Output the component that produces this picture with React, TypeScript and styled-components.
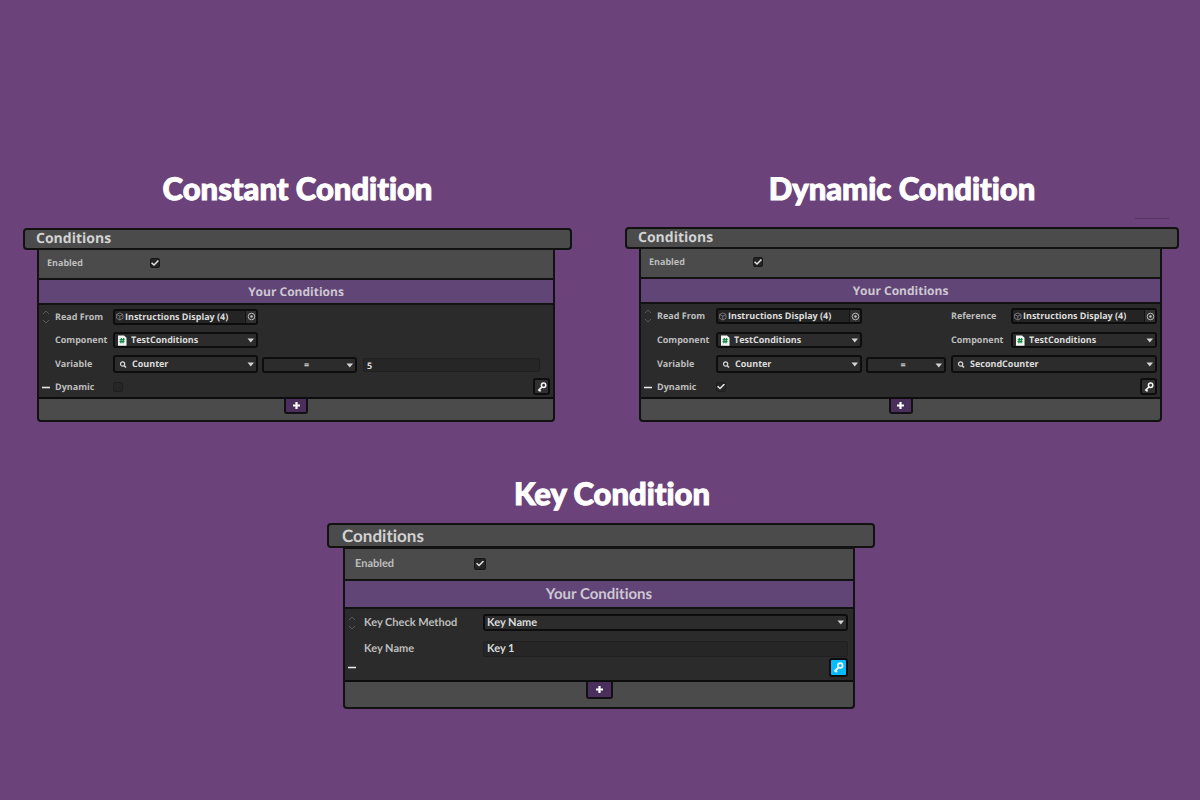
import React, { useId } from 'react';
import styled, { createGlobalStyle, css } from 'styled-components';

const GlobalStyle = createGlobalStyle`
  *, *::before, *::after { box-sizing: border-box; }
  body { margin: 0; background: #6b427a; text-rendering: geometricPrecision; }
`;

type Look = 'regular' | 'large';

const Page = styled.main`
  min-height: 100vh;
  padding: 169px 21px 90px 23px;
  color: #c4c4c4;
  font-family: 'Open Sans', sans-serif;
`;

const TopRow = styled.div`
  display: grid;
  grid-template-columns: 549fr 554fr;
  column-gap: 53px;
`;

const BottomRow = styled.div`
  display: flex;
  justify-content: center;
  margin-top: 52px;
  font-family: Lato, sans-serif;
  font-variant-ligatures: none;
`;

const Figure = styled.section<{ $share?: string }>`
  width: ${(p) => p.$share ?? '100%'};
`;

const Title = styled.h2<{ $indent?: number }>`
  margin: 0;
  padding-left: ${(p) => p.$indent ?? 0}px;
  color: #fff;
  font: 900 31px/38px Lato, sans-serif;
  font-variant-ligatures: none;
  -webkit-text-stroke: 1px #fff;
  text-align: center;
  white-space: nowrap;
`;

const TitleGap = styled.div<{ $height: number }>`
  display: flex;
  justify-content: flex-end;
  height: ${(p) => p.$height}px;
  padding: 11px 10px 0 0;
`;

const FaintRule = styled.span`
  width: 34px;
  height: 1px;
  background: #543460;
`;

const PanelHeader = styled.h3<{ $look: Look }>`
  margin: 0;
  border: 2px solid #131213;
  border-radius: 4px;
  background: #4b4b4b;
  color: #d2d2d2;
  ${(p) =>
    p.$look === 'large'
      ? css`padding: 0 13px; font-size: 17px; line-height: 21px;`
      : css`padding: 0 11px; font-size: 14px; line-height: 18px;`}
  font-weight: 700;
`;

const PanelBody = styled.div<{ $look: Look }>`
  margin: ${(p) => (p.$look === 'large' ? '-1px 20px 0 16px' : '-2px 17px 0 14px')};
  border: 2px solid #131213;
  border-radius: 0 0 4px 4px;
  background: #4b4b4b;
`;

const EnabledRow = styled.div<{ $look: Look }>`
  display: flex;
  align-items: center;
  ${(p) =>
    p.$look === 'large'
      ? css`height: 30px; padding: 0 0 1px 10px;`
      : css`height: 28px; padding: 0 0 2px 8px;`}
`;

const Banner = styled.h4<{ $look: Look }>`
  margin: 0;
  border: solid #131213;
  border-width: 2px 0;
  background: #614577;
  color: #cdc8d2;
  text-align: center;
  font-weight: 700;
  ${(p) =>
    p.$look === 'large'
      ? css`font-size: 15px; line-height: 26px;`
      : css`font-size: 12px; line-height: 23px;`}
`;

const Rows = styled.div<{ $columns: string; $rows: string; $right: number; $bottom?: number }>`
  display: grid;
  grid-template-columns: ${(p) => p.$columns};
  grid-template-rows: ${(p) => p.$rows};
  align-items: center;
  padding: 0 ${(p) => p.$right}px ${(p) => p.$bottom ?? 0}px 0;
  background: #2b2b2b;
`;

const Cell = styled.div<{ $col: string; $row: number; $low?: boolean }>`
  grid-column: ${(p) => p.$col};
  grid-row: ${(p) => p.$row};
  display: flex;
  min-width: 0;
  padding-top: ${(p) => (p.$low ? 2 : 0)}px;
`;

const Label = styled.label<{ $look?: Look; $col?: number; $row?: number; $width?: number }>`
  ${(p) => p.$col && css`grid-column: ${p.$col}; grid-row: ${p.$row};`}
  ${(p) => p.$width && css`width: ${p.$width}px;`}
  color: #bebebe;
  font-size: ${(p) => (p.$look === 'large' ? 11 : 9)}px;
  line-height: 14px;
  font-weight: 700;
  white-space: nowrap;
`;

const Tick = styled.input<{ $size: number; $faint?: boolean }>`
  appearance: none;
  display: grid;
  place-items: center;
  flex: none;
  width: ${(p) => p.$size}px;
  height: ${(p) => p.$size}px;
  margin: 0;
  border: 1px solid ${(p) => (p.$faint ? '#1f1f1f' : '#171717')};
  border-radius: 2px;
  background: ${(p) => (p.$faint ? '#262626' : '#242424')};

  &:checked::after {
    content: '';
    width: 8px;
    height: 6px;
    background: #e4e4e4;
    clip-path: polygon(0 55%, 14% 38%, 37% 66%, 86% 0, 100% 16%, 38% 100%);
  }
`;

const Field = styled.div<{ $height: number; $fill?: string }>`
  display: flex;
  align-items: center;
  flex: 1;
  min-width: 0;
  height: ${(p) => p.$height}px;
  border: 2px solid #0d0d0d;
  border-radius: 3px;
  background: ${(p) => p.$fill ?? '#2c2c2c'};
  overflow: hidden;

  > svg { flex: none; }
`;

const controlText = css<{ $look?: Look }>`
  flex: 1;
  min-width: 0;
  width: 100%;
  margin: 0;
  border: 0;
  outline: 0;
  background: transparent;
  color: #dcdcdc;
  font-family: inherit;
  font-weight: 700;
  font-size: ${(p) => (p.$look === 'large' ? 11 : 9)}px;
  line-height: 12px;
  text-rendering: inherit;
`;

const Select = styled.select<{ $look?: Look; $center?: boolean; $pad: number }>`
  appearance: none;
  ${controlText}
  padding: 0 0 0 ${(p) => p.$pad}px;
  ${(p) => p.$center && css`text-align: center; text-align-last: center;`}
`;

const ObjectInput = styled.input`
  ${controlText}
  padding: 0 0 0 1px;
`;

const ValueInput = styled.input<{ $look?: Look }>`
  ${controlText}
  height: ${(p) => (p.$look === 'large' ? 16 : 14)}px;
  padding: 0 3px;
  border: 1px solid #202020;
  border-radius: 2px;
  background: #262626;
`;

const PickButton = styled.button`
  display: grid;
  place-items: center;
  flex: none;
  width: 11px;
  height: 13px;
  padding: 0;
  border: 0;
  border-left: 1px solid #141414;
  background: #303030;
`;

const Handle = styled.button`
  grid-column: 1;
  grid-row: 1;
  display: grid;
  place-items: center;
  width: 14px;
  height: 16px;
  padding: 0;
  border: 0;
  background: none;
`;

const RemoveButton = styled(Handle)<{ $row: number }>`
  grid-row: ${(p) => p.$row};
`;

const KeyCell = styled.div<{ $row: number; $overhang: number }>`
  grid-column: -2 / -1;
  grid-row: ${(p) => p.$row};
  display: flex;
  margin-right: -${(p) => p.$overhang}px;
`;

const KeyButton = styled.button<{ $active?: boolean }>`
  display: grid;
  place-items: center;
  width: ${(p) => (p.$active ? 19 : 17)}px;
  height: ${(p) => (p.$active ? 19 : 17)}px;
  margin-left: auto;
  padding: 0;
  border: 2px solid #0d0d0d;
  border-radius: 3px;
  background: ${(p) => (p.$active ? '#06bcff' : '#303030')};
`;

const Footer = styled.div<{ $look: Look }>`
  display: flex;
  justify-content: center;
  align-items: flex-start;
  height: ${(p) => (p.$look === 'large' ? 27 : 23)}px;
  border-top: 2px solid #0d0d0d;
`;

const AddButton = styled.button<{ $look: Look }>`
  display: grid;
  place-items: center;
  width: ${(p) => (p.$look === 'large' ? 27 : 24)}px;
  height: ${(p) => (p.$look === 'large' ? 17 : 15)}px;
  padding: 0;
  border: 2px solid #131015;
  border-top: 0;
  border-radius: 0 0 3px 3px;
  background: #4a2f5d;
`;

const Caret = () => (
  <svg width="10" height="5" viewBox="0 0 10 5" aria-hidden="true">
    <path d="M1.500 0.500h6.500L4.750 4.500z" fill="#d4d4d4" />
  </svg>
);

const SearchIcon = () => (
  <svg width="15" height="9" viewBox="0 0 15 9" fill="none" stroke="#d4d4d4" aria-hidden="true">
    <circle cx="7.600" cy="4" r="2.100" strokeWidth="1.200" />
    <path d="M9 5.400l2 2.100" strokeWidth="1.500" />
  </svg>
);

const ScriptIcon = () => (
  <svg width="14" height="11" viewBox="0 0 14 11" aria-hidden="true">
    <path d="M3 0.500h6l2.500 2.200v8H3z" fill="#f2f5f2" />
    <path d="M6.400 3L5.800 8.200M8.600 3L8 8.200M4.700 4.700h5M4.500 6.600h5" stroke="#17894a" strokeWidth="1.300" fill="none" />
  </svg>
);

const CubeIcon = () => (
  <svg width="9" height="9" viewBox="0 0 9 9" fill="none" stroke="#858585" strokeWidth="0.800" aria-hidden="true">
    <path d="M4.800 0.900L8 2.500v3.800L4.800 8 1.600 6.300V2.500zM1.600 2.500l3.200 1.600L8 2.500M4.800 4.100V8" />
  </svg>
);

const TargetIcon = () => (
  <svg width="9" height="9" viewBox="0 0 9 9" aria-hidden="true">
    <circle cx="4.500" cy="4.500" r="3.300" fill="none" stroke="#c4c4c4" strokeWidth="0.900" />
    <circle cx="4.500" cy="4.500" r="1.200" fill="#c4c4c4" />
  </svg>
);

const KeyIcon = ({ size }: { size: number }) => (
  <svg width={size} height={size} viewBox="0 0 12 12" fill="none" stroke="#f4f4f4" aria-hidden="true">
    <circle cx="7.600" cy="4.200" r="2.200" strokeWidth="1.500" />
    <path d="M5.900 6L2.300 9.700M2.600 8.300l2 2" strokeWidth="1.700" />
  </svg>
);

const PlusIcon = () => (
  <svg width="9" height="9" viewBox="0 0 9 9" aria-hidden="true">
    <path d="M4.500 1v7M1 4.500h7" stroke="#fff" strokeWidth="2.200" />
  </svg>
);

const MinusIcon = () => (
  <svg width="12" height="6" viewBox="0 0 12 6" aria-hidden="true">
    <path d="M2 3.500h8" stroke="#e6e6e6" strokeWidth="1.600" />
  </svg>
);

const ReorderIcon = () => (
  <svg width="8" height="14" viewBox="0 0 8 14" fill="none" stroke="#595959" aria-hidden="true">
    <path d="M1 4l3-3 3 3M1 10l3 3 3-3" />
  </svg>
);

function Dropdown(props: {
  id?: string;
  name?: string;
  value: string;
  height: number;
  icon?: React.ReactNode;
  center?: boolean;
  look?: Look;
}) {
  return (
    <Field $height={props.height}>
      {props.icon}
      <Select
        id={props.id}
        aria-label={props.name}
        $look={props.look}
        $center={props.center}
        $pad={props.center ? 4 : 2}
      >
        <option>{props.value}</option>
      </Select>
      <Caret />
    </Field>
  );
}

function ObjectField({ id }: { id: string }) {
  return (
    <Field $height={16} $fill="#242424">
      <CubeIcon />
      <ObjectInput id={id} type="text" readOnly value="Instructions Display (4)" />
      <PickButton type="button" aria-label="Pick object">
        <TargetIcon />
      </PickButton>
    </Field>
  );
}

function Panel(props: { look: Look; tickColumn: number; children: React.ReactNode }) {
  const id = useId();
  const { look } = props;
  return (
    <div>
      <PanelHeader $look={look}>Conditions</PanelHeader>
      <PanelBody $look={look}>
        <EnabledRow $look={look}>
          <Label htmlFor={id} $look={look} $width={props.tickColumn}>
            Enabled
          </Label>
          <Tick id={id} type="checkbox" defaultChecked $size={look === 'large' ? 12 : 10} />
        </EnabledRow>
        <Banner $look={look}>Your Conditions</Banner>
        {props.children}
        <Footer $look={look}>
          <AddButton type="button" aria-label="Add condition" $look={look}>
            <PlusIcon />
          </AddButton>
        </Footer>
      </PanelBody>
    </div>
  );
}

function VariableConditions({ dynamic }: { dynamic?: boolean }) {
  const id = useId();
  return (
    <Rows
      $columns={
        dynamic
          ? '16px 59px 146fr 4px 80fr 5px 60px 146fr'
          : '16px 58px 145fr 4px 95fr 6px 177fr'
      }
      $rows={dynamic ? '24px 24px 24px 21px' : '23px 24px 24px 21px'}
      $right={dynamic ? 3 : 13}
    >
      <Handle type="button" aria-label="Reorder">
        <ReorderIcon />
      </Handle>
      <Label htmlFor={id + 'from'} $col={2} $row={1}>Read From</Label>
      <Cell $col="3" $row={1}>
        <ObjectField id={id + 'from'} />
      </Cell>
      <Label htmlFor={id + 'comp'} $col={2} $row={2}>Component</Label>
      <Cell $col="3" $row={2}>
        <Dropdown id={id + 'comp'} value="TestConditions" height={16} icon={<ScriptIcon />} />
      </Cell>
      <Label htmlFor={id + 'var'} $col={2} $row={3}>Variable</Label>
      <Cell $col="3" $row={3}>
        <Dropdown id={id + 'var'} value="Counter" height={18} icon={<SearchIcon />} />
      </Cell>
      <Cell $col="5" $row={3} $low>
        <Dropdown name="Operator" value="=" height={16} center />
      </Cell>
      {dynamic ? (
        <>
          <Label htmlFor={id + 'ref'} $col={7} $row={1}>Reference</Label>
          <Cell $col="8" $row={1}>
            <ObjectField id={id + 'ref'} />
          </Cell>
          <Label htmlFor={id + 'comp2'} $col={7} $row={2}>Component</Label>
          <Cell $col="8" $row={2}>
            <Dropdown id={id + 'comp2'} value="TestConditions" height={16} icon={<ScriptIcon />} />
          </Cell>
          <Cell $col="7 / 9" $row={3}>
            <Dropdown name="Second variable" value="SecondCounter" height={18} icon={<SearchIcon />} />
          </Cell>
        </>
      ) : (
        <Cell $col="7" $row={3} $low>
          <ValueInput type="text" aria-label="Value" defaultValue="5" />
        </Cell>
      )}
      <RemoveButton type="button" aria-label="Remove condition" $row={4}>
        <MinusIcon />
      </RemoveButton>
      <Label htmlFor={id + 'dyn'} $col={2} $row={4}>Dynamic</Label>
      <Cell $col="3" $row={4}>
        <Tick id={id + 'dyn'} type="checkbox" defaultChecked={dynamic} $size={10} $faint />
      </Cell>
      <KeyCell $row={4} $overhang={dynamic ? 0 : 10}>
        <KeyButton type="button" aria-label="Key">
          <KeyIcon size={12} />
        </KeyButton>
      </KeyCell>
    </Rows>
  );
}

function KeyConditions() {
  const id = useId();
  return (
    <Rows $columns="19px 119px 1fr" $rows="27px 25px 12px" $right={5} $bottom={7}>
      <Handle type="button" aria-label="Reorder">
        <ReorderIcon />
      </Handle>
      <Label htmlFor={id + 'method'} $look="large" $col={2} $row={1}>Key Check Method</Label>
      <Cell $col="3" $row={1}>
        <Dropdown id={id + 'method'} value="Key Name" height={17} look="large" />
      </Cell>
      <Label htmlFor={id + 'name'} $look="large" $col={2} $row={2}>Key Name</Label>
      <Cell $col="3" $row={2}>
        <ValueInput id={id + 'name'} type="text" defaultValue="Key 1" $look="large" />
      </Cell>
      <RemoveButton type="button" aria-label="Remove condition" $row={3}>
        <MinusIcon />
      </RemoveButton>
      <KeyCell $row={3} $overhang={0}>
        <KeyButton type="button" aria-label="Key" $active>
          <KeyIcon size={13} />
        </KeyButton>
      </KeyCell>
    </Rows>
  );
}

export default function App() {
  return (
    <Page>
      <GlobalStyle />
      <TopRow>
        <Figure>
          <Title>Constant Condition</Title>
          <TitleGap $height={21} />
          <Panel look="regular" tickColumn={103}>
            <VariableConditions />
          </Panel>
        </Figure>
        <Figure>
          <Title>Dynamic Condition</Title>
          <TitleGap $height={20}>
            <FaintRule />
          </TitleGap>
          <Panel look="regular" tickColumn={104}>
            <VariableConditions dynamic />
          </Panel>
        </Figure>
      </TopRow>
      <BottomRow>
        <Figure $share="47.4%">
          <Title $indent={22}>Key Condition</Title>
          <TitleGap $height={11} />
          <Panel look="large" tickColumn={119}>
            <KeyConditions />
          </Panel>
        </Figure>
      </BottomRow>
    </Page>
  );
}
